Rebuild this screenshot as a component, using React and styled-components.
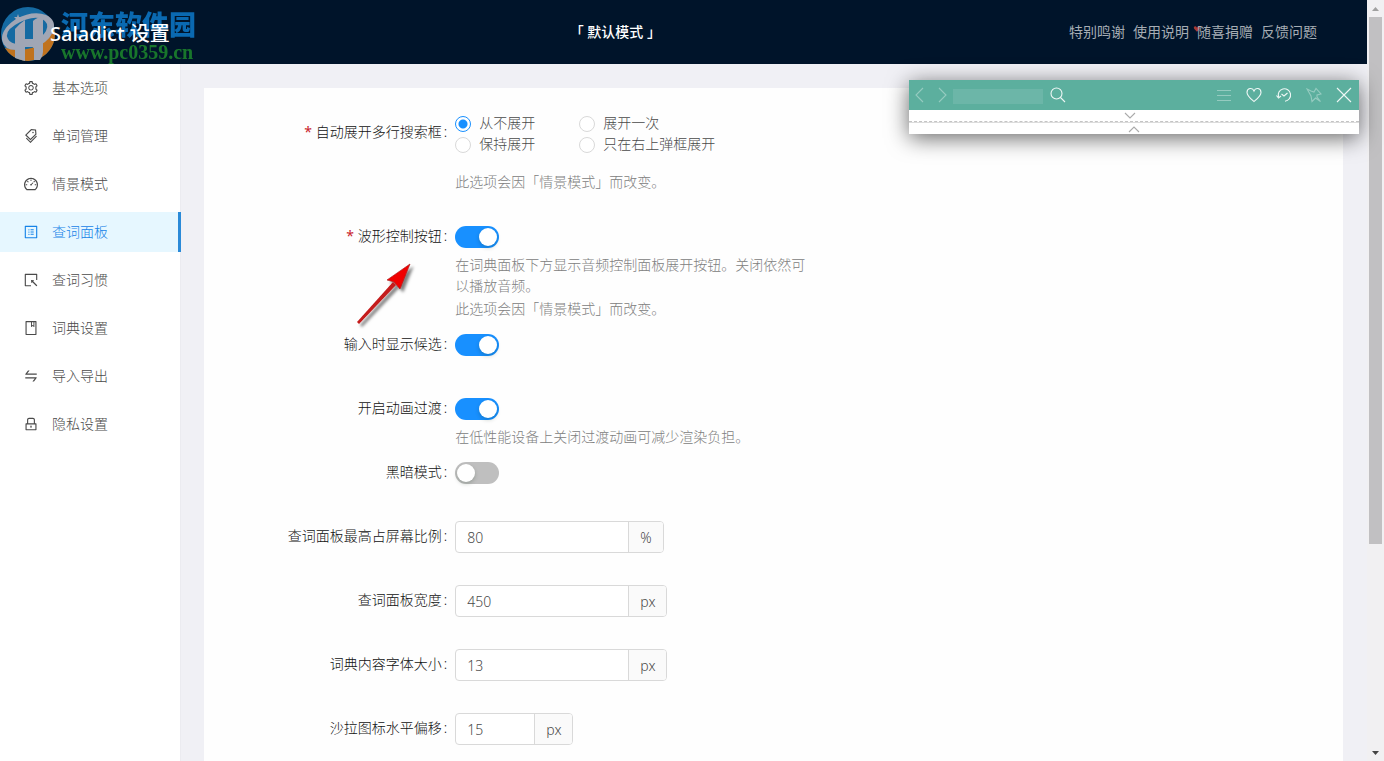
import React from "react";
import styled, { createGlobalStyle, css } from "styled-components";
import {
  AiOutlineSetting,
  AiOutlineTags,
  AiOutlineDashboard,
  AiOutlineProfile,
  AiOutlineSelect,
  AiOutlineBook,
  AiOutlineSwap,
  AiOutlineLock,
} from "react-icons/ai";

const GlobalStyle = createGlobalStyle`
  * { box-sizing: border-box; }
  body {
    margin: 0;
    font-family: "Noto Sans", "Noto Sans CJK SC", sans-serif;
    font-size: 14px;
    line-height: 21px;
    font-weight: 300;
    color: #4a4a4a;
    background: #f0f0f5;
  }
`;

const Window = styled.div`
  display: flex;
  height: 100vh;
  overflow: hidden;
`;

const Page = styled.div`
  position: relative;
  flex: 1;
  min-width: 0;
  display: flex;
  flex-direction: column;
`;

const Header = styled.header`
  flex: none;
  display: flex;
  align-items: center;
  justify-content: space-between;
  height: 64px;
  padding: 0 50px 2px;
  background: #00142a;
`;

const Title = styled.h1`
  position: relative;
  z-index: 1;
  margin: 0;
  padding-top: 6px;
  font-size: 20px;
  line-height: 28px;
  font-weight: 500;
  color: #fff;
`;

const Mode = styled.span`
  padding-right: 8px;
  font-weight: 500;
  color: #fff;
`;

const HeaderLinks = styled.nav`
  display: flex;
  gap: 8px;
`;

const HeaderLink = styled.a`
  position: relative;
  z-index: 0;
  color: #a6adb4;
  font-weight: 400;
  text-decoration: none;
`;

const Heart = styled.svg`
  position: absolute;
  left: -4px;
  top: 4px;
  z-index: -1;
`;

const Watermark = styled.div`
  position: absolute;
  left: 0;
  top: 5px;
  display: flex;
  align-items: flex-start;
  gap: 4px;
  opacity: 0.8;
  pointer-events: none;
`;

const WatermarkText = styled.div`
  padding-top: 4px;
`;

const WatermarkName = styled.div`
  font-family: "Noto Sans CJK SC", sans-serif;
  font-size: 27px;
  line-height: 30px;
  font-weight: 900;
  color: #0d7fd3;
`;

const WatermarkUrl = styled.div`
  font-family: "Liberation Serif", serif;
  font-size: 20px;
  line-height: 26px;
  font-weight: 700;
  color: #1f8f2c;
`;

const Body = styled.div`
  flex: 1;
  min-height: 0;
  display: flex;
`;

const Sider = styled.nav`
  flex: none;
  width: 181px;
  padding-top: 4px;
  background: #fff;
  border-right: 1px solid #ebebf0;
`;

const MenuItem = styled.a`
  display: flex;
  align-items: center;
  gap: 13px;
  height: 40px;
  margin: 0 -1px 8px 0;
  padding: 0 0 2px 23px;
  color: #4a4a4a;
  text-decoration: none;
  svg { width: 16px; height: 16px; margin-top: 2px; }
  ${(p) =>
    p.$active &&
    css`
      color: #1683e8;
      background: #e6f7ff;
      border-right: 3px solid #2a8ad8;
    `}
`;

const Content = styled.main`
  flex: 1;
  min-width: 0;
  padding: 24px 24px 0 23px;
`;

const Card = styled.form`
  min-height: 100%;
  padding: 24px;
  background: #fefefe;
`;

const Row = styled.div`
  display: grid;
  grid-template-columns: 5fr 8fr 11fr;
  min-height: ${(p) => (p.$tall ? 104 : 64)}px;
  padding-bottom: 5px;
`;

const Label = styled.label`
  display: block;
  padding-right: 8px;
  line-height: 40px;
  text-align: right;
  white-space: nowrap;
  color: #111;
  &::after { content: ":"; margin-left: 2px; }
  &::before {
    content: ${(p) => (p.$required ? '"*"' : "none")};
    margin-right: 4px;
    font-weight: 400;
    color: #c9232d;
  }
`;

const Field = styled.div`
  padding-top: ${(p) => p.$top}px;
  min-width: 0;
`;

const Radios = styled.div`
  display: grid;
  grid-template-columns: 124px 1fr;
`;

const RadioLabel = styled.label`
  display: flex;
  align-items: center;
  gap: 8px;
  height: 21px;
  white-space: nowrap;
`;

const Radio = styled.input`
  appearance: none;
  width: 16px;
  height: 16px;
  margin: 3px 0 0;
  border: 1px solid #d9d9d9;
  border-radius: 50%;
  background: #fff;
  &:checked {
    border-color: #1890ff;
    background: radial-gradient(circle, #1890ff 4px, #fff 5px);
  }
`;

const Switch = styled.input`
  appearance: none;
  display: block;
  width: 44px;
  height: 22px;
  margin: 0;
  padding: 2px;
  border-radius: 11px;
  background: #bfbfbf;
  &::before {
    content: "";
    display: block;
    width: 18px;
    height: 18px;
    border-radius: 50%;
    background: #fff;
    box-shadow: 0 2px 4px rgba(0, 35, 11, 0.2);
  }
  &:checked { background: #1890ff; }
  &:checked::before { margin-left: auto; }
`;

const Extra = styled.div`
  display: flex;
  flex-direction: column;
  gap: 2px;
  margin-top: ${(p) => (p.$far ? 17 : 6)}px;
  color: #808080;
  p { margin: 0; }
`;

const InputGroup = styled.div`
  display: inline-flex;
  height: 32px;
  border: 1px solid #d9d9d9;
  border-radius: 4px;
  background: #fff;
  overflow: hidden;
`;

const Input = styled.input`
  width: ${(p) => (p.$short ? 78 : 172)}px;
  padding: 0 11px;
  border: 0;
  outline: 0;
  background: transparent;
  font: inherit;
  color: #4a4a4a;
`;

const Addon = styled.span`
  padding: 0 11px;
  border-left: 1px solid #d9d9d9;
  background: #fafafa;
  line-height: 31px;
`;

const Panel = styled.section`
  position: absolute;
  top: 80px;
  right: 8px;
  width: 450px;
  background: #fff;
  box-shadow: 0 4px 22px rgba(0, 0, 0, 0.6);
`;

const PanelBar = styled.div`
  display: flex;
  align-items: center;
  height: 30px;
  background: #5caf9e;
`;

const PanelButton = styled.button`
  display: flex;
  align-items: center;
  justify-content: center;
  width: ${(p) => (p.$narrow ? 22 : 30)}px;
  height: 30px;
  padding: 0;
  border: 0;
  background: none;
  color: #fff;
  svg { opacity: ${(p) => (p.$dim ? 0.35 : 0.9)}; }
`;

const PanelSearch = styled.input`
  width: 90px;
  height: 15px;
  margin-top: 2px;
  padding: 0;
  border: 0;
  background: #6cb6a8;
`;

const Spacer = styled.span`
  flex: 1;
`;

const PanelStrip = styled.div`
  display: flex;
  justify-content: center;
  height: 12px;
  padding-right: ${(p) => (p.$dashed ? 8 : 0)}px;
  border-bottom: ${(p) => (p.$dashed ? "1px dashed #c4c4c4" : "0")};
  border-top: ${(p) => (p.$dashed ? "0" : "1px solid #dcdcdc")};
`;

const StripButton = styled.button`
  display: flex;
  align-items: center;
  padding: 0;
  border: 0;
  background: none;
  color: #aaa;
`;

const Pointer = styled.svg`
  position: absolute;
  left: 352px;
  top: 258px;
  pointer-events: none;
`;

const ScrollBar = styled.aside`
  flex: none;
  display: flex;
  flex-direction: column;
  width: 17px;
  padding: 0 2px;
  background: #f1f0f2;
`;

const ScrollArrow = styled.span`
  display: flex;
  align-items: center;
  justify-content: center;
  height: 17px;
  color: ${(p) => (p.$off ? "#a0a0a0" : "#444")};
`;

const ScrollTrack = styled.div`
  flex: 1;
`;

const ScrollThumb = styled.div`
  height: 72.5%;
  background: #c1c0c2;
`;

const menu = [
  ["基本选项", AiOutlineSetting],
  ["单词管理", AiOutlineTags],
  ["情景模式", AiOutlineDashboard],
  ["查词面板", AiOutlineProfile],
  ["查词习惯", AiOutlineSelect],
  ["词典设置", AiOutlineBook],
  ["导入导出", AiOutlineSwap],
  ["隐私设置", AiOutlineLock],
];

const switches = [
  {
    id: "waveform",
    label: "波形控制按钮",
    required: true,
    on: true,
    extra: [
      "在词典面板下方显示音频控制面板展开按钮。关闭依然可以播放音频。",
      "此选项会因「情景模式」而改变。",
    ],
  },
  { id: "suggest", label: "输入时显示候选", on: true },
  {
    id: "animation",
    label: "开启动画过渡",
    on: true,
    extra: ["在低性能设备上关闭过渡动画可减少渲染负担。"],
  },
  { id: "dark", label: "黑暗模式", on: false },
];

const numbers = [
  { id: "maxHeight", label: "查词面板最高占屏幕比例", value: "80", unit: "%" },
  { id: "width", label: "查词面板宽度", value: "450", unit: "px" },
  { id: "fontSize", label: "词典内容字体大小", value: "13", unit: "px" },
  { id: "offsetX", label: "沙拉图标水平偏移", value: "15", unit: "px", short: true },
];

function Line({ d, w = 16, h = 16, children }) {
  return (
    <svg width={w} height={h} viewBox={`0 0 ${w} ${h}`} fill="none" stroke="currentColor" strokeWidth="1.1">
      {d && <path d={d} />}
      {children}
    </svg>
  );
}

function WatermarkLogo() {
  return (
    <svg width="57" height="58" viewBox="0 0 57 58">
      <circle cx="28" cy="29" r="27" fill="#1b80c0" />
      <path d="M5 43 Q28 48 42 38 Q51 32 54 23 L55 29 A27 27 0 0 1 5 43z" fill="#f08a1c" />
      <path
        d="M8 34 Q4 27 15 20 Q32 10 42 14 Q50 18 46 26 Q42 33 33 36 V43 Q47 39 53 27 Q57 15 46 10 Q33 5 16 14 Q1 24 2 35 Q4 45 16 45 L22 44 V39 Q11 40 8 34z"
        fill="#c9cbd8"
      />
      <path d="M15 24 Q19 19 25 15 V34 H33 V16 Q37 12 43 12 V47 Q43 51 40 55 H34 V42 H25 V56 L15 53 V26z" fill="#c9cbd8" />
      <path d="M18 9l1 3h3l-2 2 1 3-3-2-3 2 1-3-2-2h3z" fill="#c9cbd8" />
    </svg>
  );
}

export default function App() {
  return (
    <>
      <GlobalStyle />
      <Window>
        <Page>
          <Header>
            <Title>Saladict 设置</Title>
            <Mode>「 默认模式 」</Mode>
            <HeaderLinks>
              <HeaderLink href="#thanks">特别鸣谢</HeaderLink>
              <HeaderLink href="#guide">使用说明</HeaderLink>
              <HeaderLink href="#donate">
                <Heart width="8" height="8" viewBox="0 0 12 10">
                  <path d="M6 9 L2 5 Q0 2 3 1 Q5 1 6 3 Q7 1 9 1 Q12 2 10 5z" fill="#a83a34" />
                </Heart>
                随喜捐赠
              </HeaderLink>
              <HeaderLink href="#feedback">反馈问题</HeaderLink>
            </HeaderLinks>
          </Header>

          <Body>
            <Sider>
              {menu.map(([name, Icon]) => (
                <MenuItem key={name} href={`#${name}`} $active={name === "查词面板"}>
                  <Icon />
                  {name}
                </MenuItem>
              ))}
            </Sider>
            <Content>
              <Card>
                <Row $tall>
                  <Label as="span" id="expand-label" $required>
                    自动展开多行搜索框
                  </Label>
                  <Field $top={0}>
                    <Radios role="radiogroup" aria-labelledby="expand-label">
                      {["从不展开", "展开一次", "保持展开", "只在右上弹框展开"].map((t, i) => (
                        <RadioLabel key={t}>
                          <Radio type="radio" name="expand" defaultChecked={i === 0} />
                          {t}
                        </RadioLabel>
                      ))}
                    </Radios>
                    <Extra $far>
                      <p>此选项会因「情景模式」而改变。</p>
                    </Extra>
                  </Field>
                </Row>
                {switches.map((s) => (
                  <Row key={s.id}>
                    <Label htmlFor={s.id} $required={s.required}>{s.label}</Label>
                    <Field $top={10}>
                      <Switch id={s.id} type="checkbox" role="switch" defaultChecked={s.on} />
                      {s.extra && (
                        <Extra>
                          {s.extra.map((t) => (
                            <p key={t}>{t}</p>
                          ))}
                        </Extra>
                      )}
                    </Field>
                  </Row>
                ))}
                {numbers.map((n) => (
                  <Row key={n.id}>
                    <Label htmlFor={n.id}>{n.label}</Label>
                    <Field $top={5}>
                      <InputGroup>
                        <Input id={n.id} type="text" inputMode="numeric" defaultValue={n.value} $short={n.short} />
                        <Addon>{n.unit}</Addon>
                      </InputGroup>
                    </Field>
                  </Row>
                ))}
              </Card>
            </Content>
          </Body>

          <Panel aria-label="查词面板">
            <PanelBar>
              <PanelButton type="button" aria-label="后退" $narrow $dim>
                <Line d="M11 1 L4 8 L11 15" />
              </PanelButton>
              <PanelButton type="button" aria-label="前进" $narrow $dim>
                <Line d="M5 1 L12 8 L5 15" />
              </PanelButton>
              <PanelSearch type="text" aria-label="搜索" />
              <PanelButton type="button" aria-label="查词">
                <Line d="M10.500 10.500 L15 15"><circle cx="6.5" cy="6.5" r="5.5" /></Line>
              </PanelButton>
              <Spacer />
              <PanelButton type="button" aria-label="菜单" $dim>
                <Line d="M1 3.500 H15 M1 8.500 H15 M1 13.500 H15" />
              </PanelButton>
              <PanelButton type="button" aria-label="收藏">
                <Line d="M8 14.500 C5 12 1 9 1 5.500 C1 1 6.500 0 8 4 C9.500 0 15 1 15 5.500 C15 9 11 12 8 14.500z" />
              </PanelButton>
              <PanelButton type="button" aria-label="历史">
                <Line d="M2.500 10 A6.200 6.200 0 1 1 9 14.200 M0.500 8.500 L2.500 11 L5 9 M5.500 7 L8 9 L11.500 6" />
              </PanelButton>
              <PanelButton type="button" aria-label="固定" $dim>
                <Line d="M1 2 L5 4 L8 5 L10 1.500 L15 7 L11 8 L11 10 L14.500 14.500 L9.500 11 L6 14.500 L5 9z" />
              </PanelButton>
              <PanelButton type="button" aria-label="关闭">
                <Line d="M1 1 L15 15 M15 1 L1 15" />
              </PanelButton>
            </PanelBar>
            <PanelStrip $dashed>
              <StripButton type="button" aria-label="展开">
                <Line w={12} h={8} d="M1 1 L6 6 L11 1" />
              </StripButton>
            </PanelStrip>
            <PanelStrip>
              <StripButton type="button" aria-label="收起">
                <Line w={12} h={8} d="M1 7 L6 2 L11 7" />
              </StripButton>
            </PanelStrip>
          </Panel>

          <Pointer width="68" height="72" viewBox="0 0 68 72">
            <defs>
              <filter id="shade" x="-20%" y="-20%" width="150%" height="150%">
                <feDropShadow dx="3" dy="3" stdDeviation="1.5" floodOpacity="0.5" />
              </filter>
            </defs>
            <g filter="url(#shade)">
              <path d="M5 64 L41 24 L44 27 L7 66z" fill="#c41a1a" />
              <path d="M58 6 L35 22 L42 24 L48 31z" fill="#f00505" stroke="#a01010" strokeWidth="0.6" />
            </g>
          </Pointer>

          <Watermark>
            <WatermarkLogo />
            <WatermarkText>
              <WatermarkName>河东软件园</WatermarkName>
              <WatermarkUrl>www.pc0359.cn</WatermarkUrl>
            </WatermarkText>
          </Watermark>
        </Page>

        <ScrollBar aria-hidden="true">
          <ScrollArrow $off>
            <svg width="7" height="4" viewBox="0 0 7 4"><path d="M0 4 L3.500 0 L7 4z" fill="currentColor" /></svg>
          </ScrollArrow>
          <ScrollTrack>
            <ScrollThumb />
          </ScrollTrack>
          <ScrollArrow>
            <svg width="7" height="4" viewBox="0 0 7 4"><path d="M0 0 L3.500 4 L7 0z" fill="currentColor" /></svg>
          </ScrollArrow>
        </ScrollBar>
      </Window>
    </>
  );
}
